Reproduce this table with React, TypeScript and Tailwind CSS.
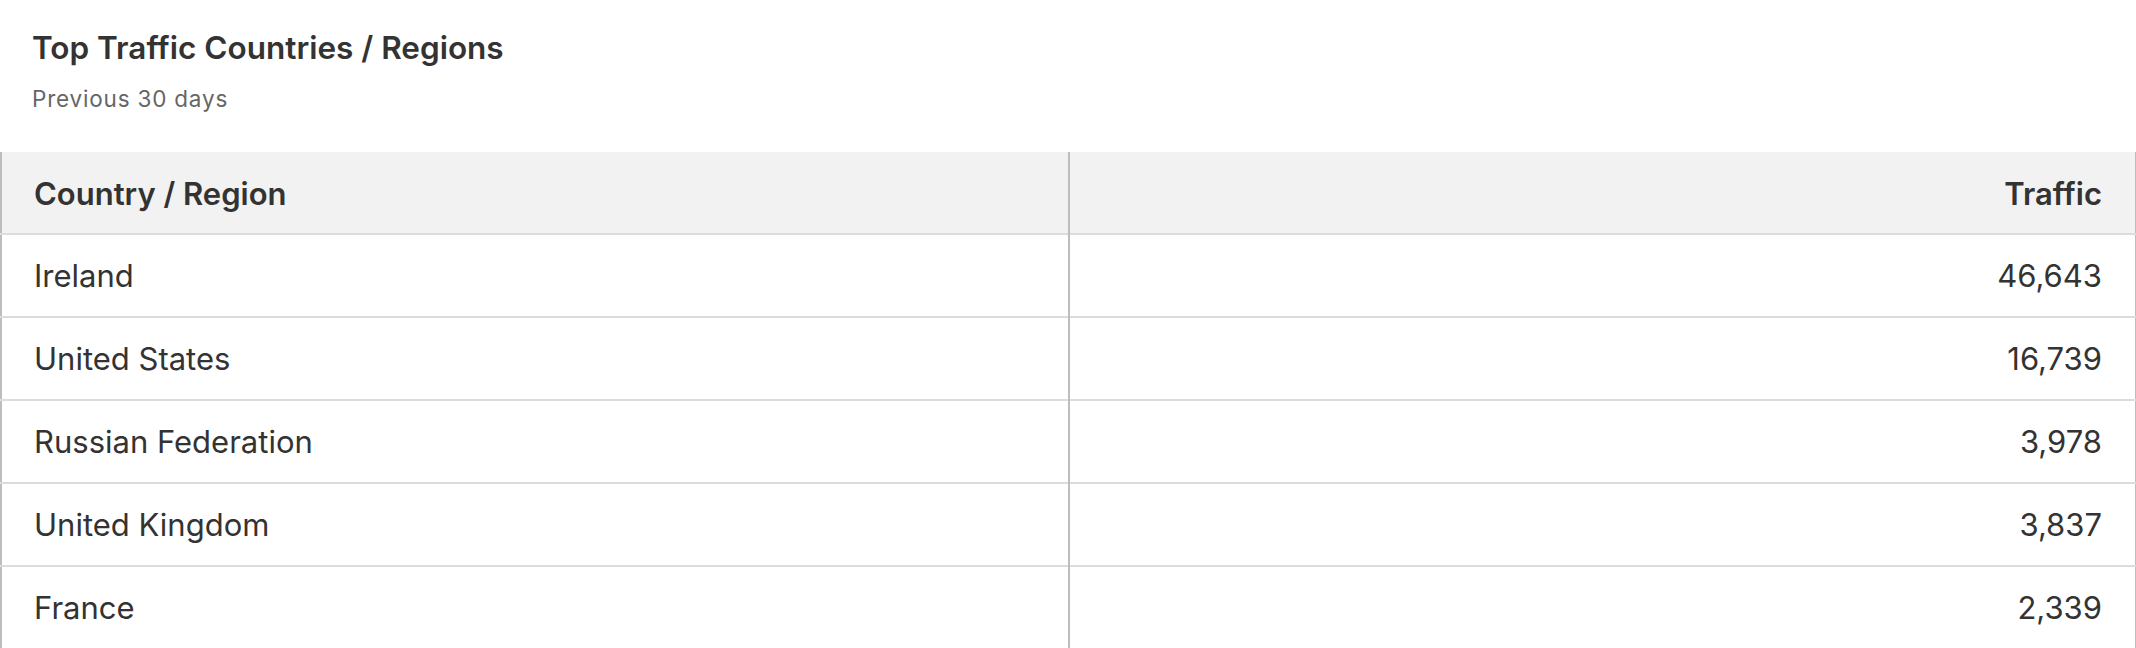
const rows = [
  { country: "Ireland", traffic: "46,643" },
  { country: "United States", traffic: "16,739" },
  { country: "Russian Federation", traffic: "3,978" },
  { country: "United Kingdom", traffic: "3,837" },
  { country: "France", traffic: "2,339" },
];

export default function App() {
  return (
    <div className="w-[2136px] h-[648px] bg-white overflow-hidden font-['Inter',sans-serif] text-[#333333]">
      <div className="h-[152px] pl-[32px] pt-[28px]">
        <h2 className="text-[31.5px] leading-[40px] font-semibold">
          Top Traffic Countries / Regions
        </h2>
        <p className="mt-[17px] text-[22.5px] leading-[28px] tracking-[0.8px] text-[#666666]">Previous 30 days</p>
      </div>
      <table className="w-full border-collapse border-l-2 border-r border-[#bdbdbd]">
        <thead>
          <tr className="bg-[#f2f2f2] h-[82px] border-b-2 border-[#dcdcdc]">
            <th className="w-[1068px] text-left font-semibold text-[31px] pl-[32px] pt-[3px] border-r-2 border-[#bdbdbd]">
              Country / Region
            </th>
            <th className="text-right font-semibold text-[31px] pr-[33px] pt-[3px]">Traffic</th>
          </tr>
        </thead>
        <tbody>
          {rows.map((r) => (
            <tr key={r.country} className="h-[83px] border-b-2 border-[#dcdcdc]">
              <td className="text-left text-[31px] pl-[32px] pt-[2px] border-r-2 border-[#bdbdbd]">{r.country}</td>
              <td className="text-right text-[31px] pr-[33px] pt-[2px]">{r.traffic}</td>
            </tr>
          ))}
        </tbody>
      </table>
    </div>
  );
}
